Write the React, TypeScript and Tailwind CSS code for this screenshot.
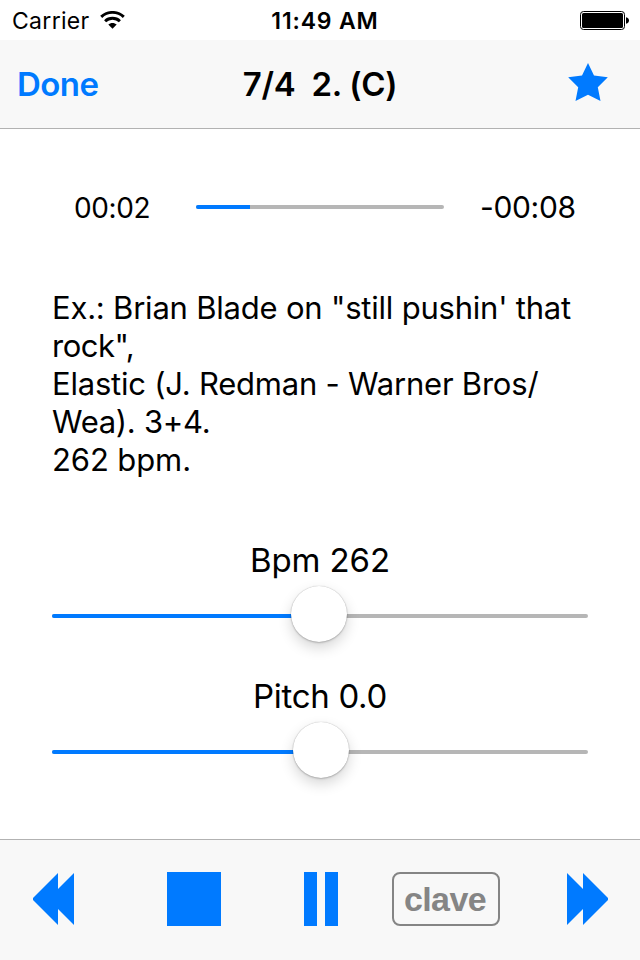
import { useState } from 'react';

const NOTES = [
  { text: 'Ex.: Brian Blade on "still pushin\' that', tracking: 'tracking-[-0.21px]' },
  { text: 'rock",', tracking: 'tracking-[-0.5px]' },
  { text: 'Elastic (J. Redman - Warner Bros/', tracking: 'tracking-[-0.22px]' },
  { text: 'Wea). 3+4.', tracking: 'tracking-[-0.3px]' },
  { text: '262 bpm.', tracking: 'tracking-[-0.1px]' },
];

function WifiIcon() {
  return (
    <svg className="-mt-px" width="25" height="18" viewBox="0 0 25 18" fill="none" stroke="black" strokeWidth="2.9">
      <path d="M1.2 5.9C7.4 -0.1 17.6 -0.1 23.8 5.9" />
      <path d="M5.1 10.2C9.2 6.3 15.8 6.3 19.9 10.2" />
      <path d="M8.3 13.6C10.6 11.3 14.4 11.3 16.7 13.6L12.5 17.8Z" fill="black" stroke="none" />
    </svg>
  );
}

function BatteryIcon() {
  return (
    <svg width="49" height="19" viewBox="0 0 49 19">
      <rect x="0.5" y="0.5" width="44" height="18" rx="3" fill="none" stroke="black" />
      <rect x="2" y="2" width="41" height="15" rx="1.5" fill="black" />
      <path d="M46 6.2C48.2 6.8 49 8 49 9.5C49 11 48.2 12.2 46 12.8Z" fill="black" />
    </svg>
  );
}

function Slider({ value }: { value: number }) {
  return (
    <div className="relative h-[56px] w-[536px] flex items-center">
      <div className="mt-1 flex h-1 w-full overflow-hidden rounded-full bg-[#b6b6b6]">
        <div className="h-full bg-[#007aff]" style={{ width: value }} />
      </div>
      <div
        className="absolute top-0 size-14 -translate-x-1/2 rounded-full bg-white shadow-[0_0_1px_rgba(0,0,0,0.3),0_1px_2px_rgba(0,0,0,0.2),0_6px_14px_rgba(0,0,0,0.16)]"
        style={{ left: value }}
      />
    </div>
  );
}

export default function App() {
  const [favorite, setFavorite] = useState(true);
  const [playing, setPlaying] = useState(true);

  return (
    <div className="flex h-[960px] w-[640px] flex-col overflow-hidden bg-white font-['Inter',sans-serif] text-black">
      <div className="grid h-10 grid-cols-3 items-center pl-[12px] pr-[11px]">
        <div className="flex items-center gap-[10px]">
          <span className="pt-px text-[23px] leading-[40px] tracking-[0.3px]">Carrier</span>
          <WifiIcon />
        </div>
        <span className="pl-[9px] pt-px text-center text-[23px] font-semibold leading-[40px] tracking-[0.85px]">11:49 AM</span>
        <div className="flex justify-end">
          <BatteryIcon />
        </div>
      </div>

      <header className="grid h-[89px] grid-cols-[160px_1fr_160px] items-center border-b border-[#b2b2b2] bg-[#f8f8f8] pl-4 pr-8">
        <button className="pl-px text-left text-[33px] font-semibold leading-[40px] tracking-[-0.55px] text-[#007aff]">Done</button>
        <h1 className="whitespace-pre pl-4 text-center text-[33px] font-semibold leading-[40px] tracking-[-0.3px]">{'7/4  2. (C)'}</h1>
        <button className="-mt-1 flex justify-end" onClick={() => setFavorite(!favorite)}>
          <svg width="40" height="38" viewBox="0 0 40 38" fill={favorite ? '#007aff' : 'none'}>
            <path d="M20 0L26 12.5L39.8 14.3L29.8 24.3L32.5 38L20 31.8L7.5 38L10.2 24.3L0.2 14.3L14 12.5Z" />
          </svg>
        </button>
      </header>

      <main className="flex flex-1 flex-col px-[52px]">
        <div className="mt-[58px] flex h-10 items-center pl-[22px]">
          <span className="w-[122px] pt-px text-[28px] leading-[40px] tracking-[-0.4px]">00:02</span>
          <div className="flex h-1 w-[248px] overflow-hidden rounded-full bg-[#b6b6b6]">
            <div className="h-full w-[54px] bg-[#007aff]" />
          </div>
          <span className="ml-[36px] text-[30px] leading-[40px] tracking-[-0.35px]">-00:08</span>
        </div>

        <div className="mt-[62px] text-[31px] leading-[38px]">
          {NOTES.map((line) => (
            <p key={line.text} className={`whitespace-nowrap ${line.tracking}`}>
              {line.text}
            </p>
          ))}
        </div>

        <div className="mt-[61px] flex flex-col items-center">
          <label className="text-[33px] leading-[40px] tracking-[-0.1px]">Bpm 262</label>
          <div className="mt-[6px]">
            <Slider value={267} />
          </div>
        </div>
        <div className="mt-[34px] flex flex-col items-center">
          <label className="text-[33px] leading-[40px] tracking-[-0.3px]">Pitch 0.0</label>
          <div className="mt-[6px]">
            <Slider value={269} />
          </div>
        </div>
      </main>

      <footer className="flex h-[121px] items-start border-t border-[#b2b2b2] bg-[#f8f8f8] pl-[33px] pt-8 text-[#007aff]">
        <button className="mt-px">
          <svg width="41" height="52" viewBox="0 0 41 52" fill="currentColor">
            <path d="M0 25L25 0V16L41 0V52L25 36V52L0 27Z" />
          </svg>
        </button>
        <button className="ml-[93px] size-[54px] bg-[#007aff]" aria-label="Stop" />
        <button className="ml-[83px] flex h-[54px] gap-2" aria-label="Pause" onClick={() => setPlaying(!playing)}>
          <span className="h-full w-[13px] bg-[#007aff]" />
          <span className="h-full w-[13px] bg-[#007aff]" />
        </button>
        <button className="ml-[54px] h-[54px] w-[108px] rounded-[8px] border-2 border-[#858585] pr-[2px] font-['Liberation_Sans',sans-serif] text-[34px] font-bold leading-[50px] tracking-[-0.6px] text-[#858585]">
          clave
        </button>
        <button className="ml-[67px] mt-px">
          <svg width="41" height="52" viewBox="0 0 41 52" fill="currentColor">
            <path d="M41 25L16 0V16L0 0V52L16 36V52L41 27Z" />
          </svg>
        </button>
      </footer>
    </div>
  );
}
